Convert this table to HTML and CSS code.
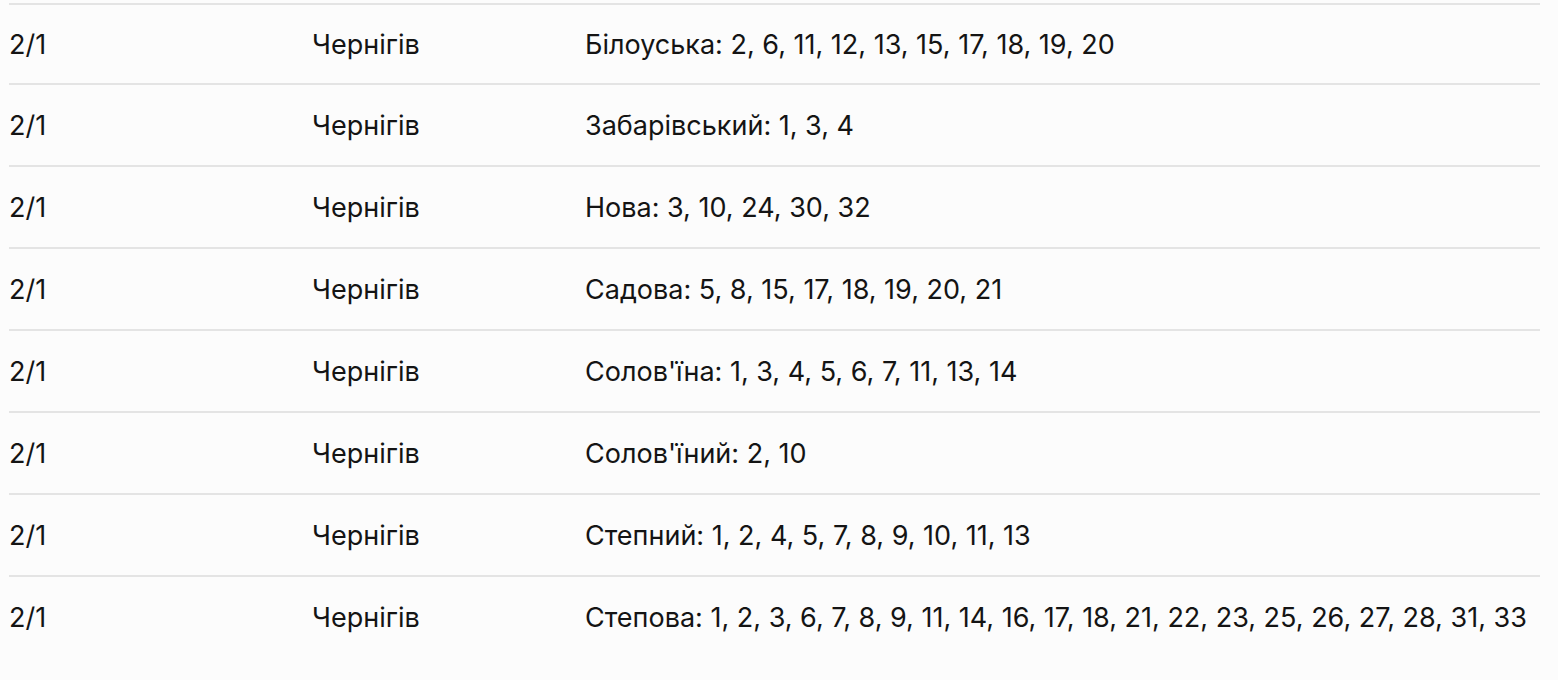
FILE: index.html
```html
<!DOCTYPE html>
<html lang="uk">
<head>
<meta charset="utf-8">
<link rel="stylesheet" href="styles.css">
</head>
<body>
<div class="table">
  <div class="row"><div class="c1">2/1</div><div class="c2">Чернігів</div><div class="c3">Білоуська: 2, 6, 11, 12, 13, 15, 17, 18, 19, 20</div></div>
  <div class="row"><div class="c1">2/1</div><div class="c2">Чернігів</div><div class="c3">Забарівський: 1, 3, 4</div></div>
  <div class="row"><div class="c1">2/1</div><div class="c2">Чернігів</div><div class="c3">Нова: 3, 10, 24, 30, 32</div></div>
  <div class="row"><div class="c1">2/1</div><div class="c2">Чернігів</div><div class="c3">Садова: 5, 8, 15, 17, 18, 19, 20, 21</div></div>
  <div class="row"><div class="c1">2/1</div><div class="c2">Чернігів</div><div class="c3">Солов'їна: 1, 3, 4, 5, 6, 7, 11, 13, 14</div></div>
  <div class="row"><div class="c1">2/1</div><div class="c2">Чернігів</div><div class="c3">Солов'їний: 2, 10</div></div>
  <div class="row"><div class="c1">2/1</div><div class="c2">Чернігів</div><div class="c3">Степний: 1, 2, 4, 5, 7, 8, 9, 10, 11, 13</div></div>
  <div class="row"><div class="c1">2/1</div><div class="c2">Чернігів</div><div class="c3">Степова: 1, 2, 3, 6, 7, 8, 9, 11, 14, 16, 17, 18, 21, 22, 23, 25, 26, 27, 28, 31, 33</div></div>
</div>
</body>
</html>
```
FILE: styles.css
```css
html, body {
  margin: 0;
  padding: 0;
  background: #fcfcfc;
}
body {
  font-family: Inter, "Noto Sans", sans-serif;
  font-size: 27px;
  color: #141414;
}
.table {
  margin: 3px 0 0 9px;
  width: 1531px;
}
.row {
  display: grid;
  grid-template-columns: 303px 273px 1fr;
  align-items: center;
  height: 80px;
  border-top: 2px solid #e4e4e4;
  white-space: nowrap;
}
.row:first-child {
  height: 78px;
}
```
